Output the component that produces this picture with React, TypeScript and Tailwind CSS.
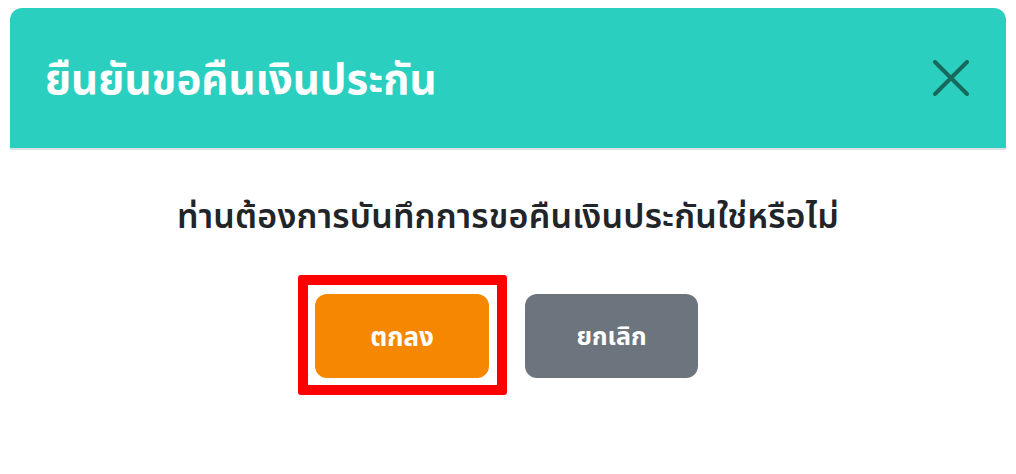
export default function App() {
  return (
    <div
      className="w-[1016px] h-[474px] bg-white pt-[8px] px-[10px] overflow-hidden"
      style={{ fontFamily: '"Noto Sans", "Noto Sans Thai", Loma, sans-serif' }}
    >
      <div className="w-[996px] h-[460px] bg-white rounded-[12px] overflow-hidden flex flex-col">
        <div className="h-[142px] bg-[#2bcfc0] border-b-2 border-[#dee2e6] flex items-center justify-between pl-[35px] pr-[37px]">
          <h1 className="text-[42px] font-bold text-white leading-none">ยืนยันขอคืนเงินประกัน</h1>
          <button className="text-[#17695d]">
            <svg width="36" height="36" viewBox="0 0 36 36" fill="none" stroke="currentColor" strokeWidth="4" strokeLinecap="round">
              <path d="M2 2 L34 34 M34 2 L2 34" />
            </svg>
          </button>
        </div>
        <div className="flex flex-col items-center pt-[43px]">
          <p className="text-[34px] font-semibold text-[#212529] leading-[44px] tracking-[0.2px]">
            ท่านต้องการบันทึกการขอคืนเงินประกันใช่หรือไม่
          </p>
          <div className="flex gap-[36px] mt-[57px] pr-[3px]">
            <div className="relative">
              <button className="w-[174px] h-[84px] rounded-[12px] bg-[#f68700] text-white text-[26px] font-bold">
                ตกลง
              </button>
              <span className="absolute -left-[17px] -top-[19px] -right-[18px] -bottom-[17px] border-[10px] border-[#ff0000] rounded-[3px] pointer-events-none" />
            </div>
            <button className="w-[173px] h-[84px] rounded-[12px] bg-[#6c757d] text-white text-[25px] font-bold">
              ยกเลิก
            </button>
          </div>
        </div>
      </div>
    </div>
  );
}
